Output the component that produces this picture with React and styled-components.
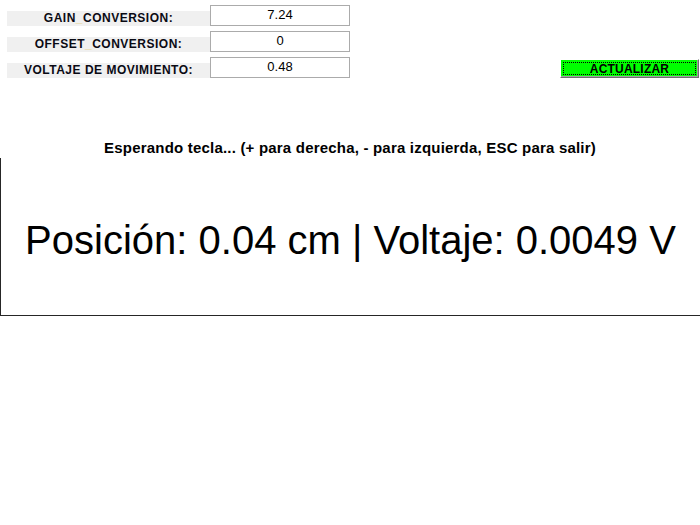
import { createGlobalStyle } from 'styled-components';
import styled from 'styled-components';

const GlobalStyle = createGlobalStyle`
  html, body {
    margin: 0;
    padding: 0;
    background: #ffffff;
    font-family: 'Liberation Sans', Arial, sans-serif;
  }
`;

const Page = styled.div`
  width: 700px;
  height: 525px;
  background: #ffffff;
`;

const Form = styled.div`
  display: flex;
  flex-direction: column;
  gap: 5px;
  padding-top: 5px;
`;

const Row = styled.div`
  display: flex;
  align-items: flex-end;
  padding-left: 7px;
`;

const Label = styled.div`
  width: 203px;
  height: 15px;
  background: #f0f0f0;
  color: #0a0a14;
  font-size: 12px;
  font-weight: bold;
  letter-spacing: 0.5px;
  line-height: 15px;
  text-align: center;
  white-space: nowrap;
`;

const Underscore = styled.span`
  color: #e6d79a;
`;

const Field = styled.input`
  box-sizing: border-box;
  width: 140px;
  height: 21px;
  margin: 0;
  padding: 0 0 2px;
  border: 1px solid #ababab;
  background: #ffffff;
  color: #000000;
  font-family: 'Liberation Sans', Arial, sans-serif;
  font-size: 13px;
  text-align: center;
  outline: none;
`;

const UpdateButton = styled.button`
  box-sizing: border-box;
  width: 139px;
  height: 19px;
  margin: 0 1px 0 auto;
  padding: 0;
  background: #00ff00;
  border: 1px solid;
  border-color: #ffffff #6e6e6e #6e6e6e #ffffff;
  box-shadow: inset -1px -1px 0 #a0a0a0;
  outline: 1px dotted #000000;
  outline-offset: -4px;
  color: #000000;
  font-family: 'Liberation Sans', Arial, sans-serif;
  font-size: 12px;
  font-weight: bold;
  letter-spacing: 0.2px;
  line-height: 16px;
`;

const Status = styled.div`
  margin-top: 61px;
  height: 19px;
  color: #000000;
  font-size: 15px;
  font-weight: bold;
  letter-spacing: 0.2px;
  line-height: 17px;
  text-align: center;
  white-space: nowrap;
`;

const Readout = styled.div`
  box-sizing: border-box;
  height: 158px;
  padding-top: 59px;
  border-left: 1px solid #262626;
  border-bottom: 1px solid #262626;
  color: #000000;
  font-size: 40px;
  line-height: 46px;
  text-align: center;
  white-space: nowrap;
`;

const params = [
  { label: ['GAIN', 'CONVERSION:'], value: '7.24' },
  { label: ['OFFSET', 'CONVERSION:'], value: '0' },
  { label: ['VOLTAJE DE MOVIMIENTO:'], value: '0.48' },
];

export default function App() {
  return (
    <Page>
      <GlobalStyle />
      <Form>
        {params.map((p, i) => (
          <Row key={i}>
            <Label>
              {p.label.length > 1 ? (
                <>
                  {p.label[0]}
                  <Underscore>_</Underscore>
                  {p.label[1]}
                </>
              ) : (
                p.label[0]
              )}
            </Label>
            <Field readOnly defaultValue={p.value} />
            {i === params.length - 1 && <UpdateButton>ACTUALIZAR</UpdateButton>}
          </Row>
        ))}
      </Form>
      <Status>Esperando tecla... (+ para derecha, - para izquierda, ESC para salir)</Status>
      <Readout>Posición: 0.04 cm | Voltaje: 0.0049 V</Readout>
    </Page>
  );
}
